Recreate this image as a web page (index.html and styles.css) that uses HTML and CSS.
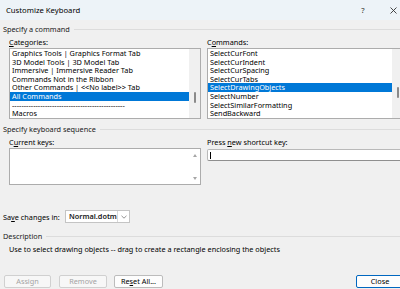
FILE: index.html
```html
<!DOCTYPE html>
<html lang="en">
<head>
    <meta charset="UTF-8">
    <meta name="viewport" content="width=device-width, initial-scale=1.0">
    <title>Customize Keyboard</title>
    <link rel="stylesheet" href="styles.css">
</head>
<body>
    <div class="dialog">
        <div class="titlebar">
            <span class="title">Customize Keyboard</span>
            <span class="help">?</span>
            <span class="close-x">
                <svg width="7" height="7" viewBox="0 0 7 7"><path d="M0.5 0.5 L6.5 6.5 M6.5 0.5 L0.5 6.5" stroke="#333" stroke-width="0.9" fill="none"/></svg>
            </span>
        </div>

        <div class="content">
            <div class="group-head">Specify a command</div>
            <div class="pair">
                <div class="col col-left">
                    <div class="label"><u>C</u>ategories:</div>
                    <div class="listbox">
                        <ul class="items">
                            <li>Graphics Tools | Graphics Format Tab</li>
                            <li>3D Model Tools | 3D Model Tab</li>
                            <li>Immersive | Immersive Reader Tab</li>
                            <li>Commands Not in the Ribbon</li>
                            <li>Other Commands | &lt;&lt;No label&gt;&gt; Tab</li>
                            <li class="selected">All Commands</li>
                            <li>------------------------------------------------</li>
                            <li>Macros</li>
                        </ul>
                        <div class="track"><div class="thumb thumb-cat"></div></div>
                    </div>
                </div>
                <div class="col col-right">
                    <div class="label">C<u>o</u>mmands:</div>
                    <div class="listbox">
                        <ul class="items">
                            <li>SelectCurFont</li>
                            <li>SelectCurIndent</li>
                            <li>SelectCurSpacing</li>
                            <li>SelectCurTabs</li>
                            <li class="selected">SelectDrawingObjects</li>
                            <li>SelectNumber</li>
                            <li>SelectSimilarFormatting</li>
                            <li>SendBackward</li>
                        </ul>
                        <div class="track"><div class="thumb thumb-cmd"></div></div>
                    </div>
                </div>
            </div>

            <div class="group-head second">Specify keyboard sequence</div>
            <div class="pair">
                <div class="col col-left">
                    <div class="label">C<u>u</u>rrent keys:</div>
                    <div class="keysbox">
                        <div class="keys"></div>
                        <div class="arrows">
                            <span class="arrow up"></span>
                            <span class="arrow down"></span>
                        </div>
                    </div>
                </div>
                <div class="col col-right">
                    <div class="label">Press <u>n</u>ew shortcut key:</div>
                    <div class="shortcut"><span class="caret"></span></div>
                </div>
            </div>

            <div class="save-row">
                <span class="save-label">Sa<u>v</u>e changes in:</span>
                <div class="combo">
                    <span class="combo-value">Normal.dotm</span>
                    <span class="combo-btn">
                        <svg width="6" height="4" viewBox="0 0 6 4"><path d="M0.5 0.8 L3 3.2 L5.5 0.8" stroke="#777" stroke-width="0.8" fill="none"/></svg>
                    </span>
                </div>
            </div>

            <div class="group-head third">Description</div>
            <p class="desc">Use to select drawing objects -- drag to create a rectangle enclosing the objects</p>

            <div class="buttons">
                <button class="btn" disabled>Assign</button>
                <button class="btn" disabled>Remove</button>
                <button class="btn">Re<u>s</u>et All...</button>
                <button class="btn default">Close</button>
            </div>
        </div>
    </div>
</body>
</html>
```

FILE: styles.css
```css
html, body {
    margin: 0;
    padding: 0;
    overflow: hidden;
}
body {
    width: 400px;
    height: 289px;
    background-color: #f0f0f0;
    font-family: "Noto Sans", "Liberation Sans", sans-serif;
    font-size: 7.3px;
    color: #000;
}
.dialog {
    width: 420px;
}
.titlebar {
    height: 20px;
    display: flex;
    align-items: center;
    padding-left: 6px;
    background-color: #edf3f8;
}
.title {
    flex: 1;
    font-size: 7.7px;
}
.help {
    width: 10px;
    text-align: center;
    font-size: 7.7px;
    color: #333;
}
.close-x {
    width: 10px;
    margin-left: 20px;
    margin-right: 22px;
    display: flex;
    justify-content: center;
}
.content {
    padding: 4px 0 0 3px;
}
.group-head {
    display: flex;
    align-items: center;
    height: 10px;
    line-height: 10px;
    color: #1a1a1a;
}
.group-head::after {
    content: "";
    flex: 1;
    border-top: 1px solid #dcdcdc;
    margin-left: 4px;
}
.group-head.second {
    margin-top: 5px;
}
.group-head.third {
    margin-top: 8px;
}
.pair {
    display: flex;
    gap: 6px;
    padding-left: 6px;
}
.col-left {
    width: 192px;
}
.col-right {
    width: 197px;
}
.label {
    height: 10px;
    line-height: 10px;
    margin-top: 3px;
    white-space: nowrap;
}
.listbox {
    margin-top: 1px;
    height: 69px;
    display: flex;
    border: 1px solid #acacac;
    background-color: #fff;
}
.items {
    flex: 1;
    list-style: none;
    margin: 0;
    padding: 0;
}
.items li {
    height: 8.6px;
    line-height: 8.6px;
    padding-left: 2px;
    white-space: nowrap;
}
.items li.selected {
    background-color: #0078d7;
    color: #fff;
}
.track {
    width: 11px;
    background-color: #f0f0f0;
}
.thumb {
    width: 2px;
    height: 11px;
    margin: 0 auto;
    background-color: #8a8a8a;
    border-radius: 1px;
}
.thumb-cat {
    margin-top: 43px;
}
.thumb-cmd {
    margin-top: 38px;
}
.keysbox {
    margin-top: 1px;
    height: 35px;
    display: flex;
    border: 1px solid #acacac;
    background-color: #fff;
}
.keys {
    flex: 1;
}
.arrows {
    width: 11px;
    display: flex;
    flex-direction: column;
    justify-content: space-between;
    align-items: center;
    padding: 5px 0 4px;
}
.arrow {
    width: 0;
    height: 0;
    border-left: 2.5px solid transparent;
    border-right: 2.5px solid transparent;
}
.arrow.up {
    border-bottom: 3px solid #a6a6a6;
}
.arrow.down {
    border-top: 3px solid #a6a6a6;
}
.shortcut {
    margin-top: 2px;
    height: 10px;
    border: 1px solid #b9b9b9;
    border-bottom-color: #8f8f8f;
    border-radius: 2px;
    background-color: #fff;
    display: flex;
    align-items: center;
    padding-left: 2px;
}
.caret {
    width: 1px;
    height: 7px;
    background-color: #000;
}
.save-row {
    display: flex;
    align-items: center;
    margin-top: 25px;
    height: 13px;
}
.save-label {
    width: 62px;
    white-space: nowrap;
}
.combo {
    width: 63px;
    height: 11px;
    display: flex;
    border: 1px solid #c4c4c4;
    background-color: #fff;
}
.combo-value {
    flex: 1;
    line-height: 11px;
    padding-left: 3px;
    font-weight: 600;
    color: #1a1a1a;
    white-space: nowrap;
}
.combo-btn {
    width: 11px;
    border-left: 1px solid #dadada;
    display: flex;
    align-items: center;
    justify-content: center;
}
.desc {
    margin: 3px 0 0;
    padding-left: 6px;
    height: 10px;
    line-height: 10px;
    white-space: nowrap;
}
.buttons {
    display: flex;
    width: 400px;
    margin-top: 21px;
    padding-left: 1px;
}
.btn {
    font-family: inherit;
    font-size: 7.3px;
    height: 13px;
    padding: 0;
    margin-right: 7px;
    border: 1px solid #bcbcbc;
    border-radius: 2px;
    background-color: #fdfdfd;
    color: #000;
    line-height: 11px;
}
.btn:nth-child(1) {
    width: 47px;
    margin-right: 8px;
}
.btn:nth-child(2) {
    width: 48px;
}
.btn:nth-child(3) {
    width: 49px;
}
.btn:disabled {
    color: #a3a3a3;
    border-color: #d0d0d0;
    background-color: #f7f7f7;
}
.btn.default {
    width: 48px;
    margin-left: auto;
    margin-right: 0;
    border-color: #0067c0;
}
```
